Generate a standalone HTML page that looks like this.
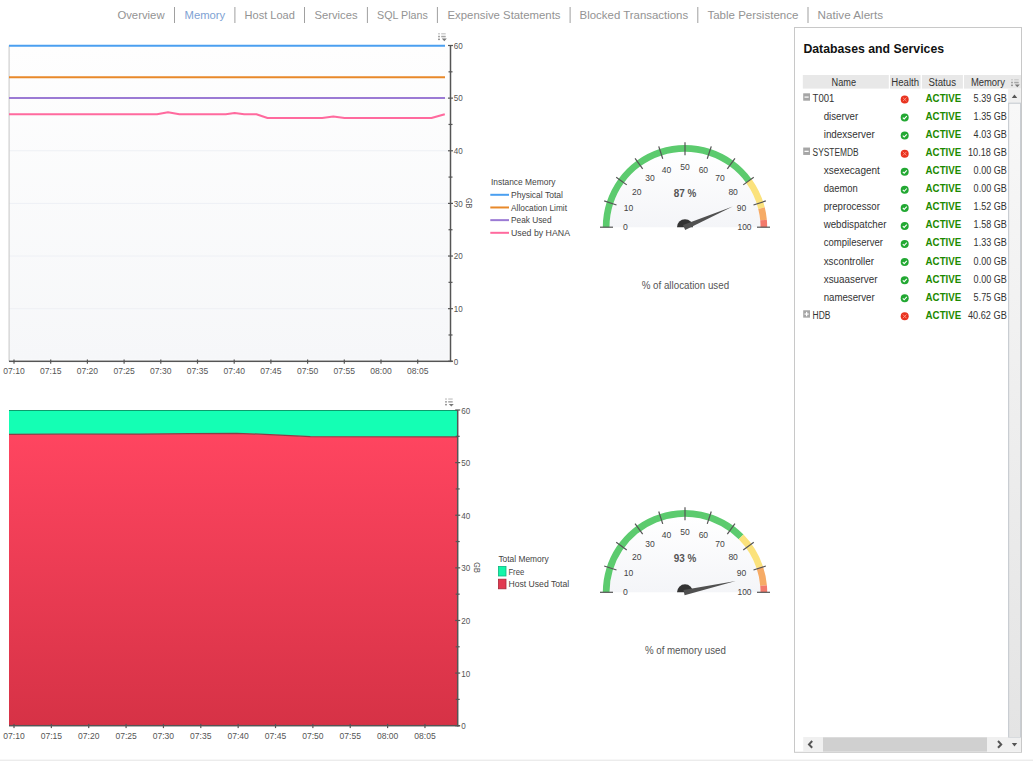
<!DOCTYPE html>
<html><head><meta charset="utf-8"><style>
html,body{margin:0;padding:0;background:#fff;width:1033px;height:761px;overflow:hidden}
svg{display:block;font-family:'Liberation Sans', sans-serif}
</style></head><body>
<svg width="1033" height="761" viewBox="0 0 1033 761">
<text x="117.40" y="19.10" font-size="11.5" fill="#939393" text-anchor="start" font-weight="normal" textLength="47.20" lengthAdjust="spacingAndGlyphs" >Overview</text>
<text x="184.50" y="19.10" font-size="11.5" fill="#7ea2d3" text-anchor="start" font-weight="normal" textLength="40.70" lengthAdjust="spacingAndGlyphs" >Memory</text>
<text x="244.60" y="19.10" font-size="11.5" fill="#939393" text-anchor="start" font-weight="normal" textLength="50.30" lengthAdjust="spacingAndGlyphs" >Host Load</text>
<text x="314.50" y="19.10" font-size="11.5" fill="#939393" text-anchor="start" font-weight="normal" textLength="43.00" lengthAdjust="spacingAndGlyphs" >Services</text>
<text x="377.00" y="19.10" font-size="11.5" fill="#939393" text-anchor="start" font-weight="normal" textLength="50.80" lengthAdjust="spacingAndGlyphs" >SQL Plans</text>
<text x="447.50" y="19.10" font-size="11.5" fill="#939393" text-anchor="start" font-weight="normal" textLength="113.00" lengthAdjust="spacingAndGlyphs" >Expensive Statements</text>
<text x="579.60" y="19.10" font-size="11.5" fill="#939393" text-anchor="start" font-weight="normal" textLength="108.60" lengthAdjust="spacingAndGlyphs" >Blocked Transactions</text>
<text x="707.40" y="19.10" font-size="11.5" fill="#939393" text-anchor="start" font-weight="normal" textLength="91.00" lengthAdjust="spacingAndGlyphs" >Table Persistence</text>
<text x="817.60" y="19.10" font-size="11.5" fill="#939393" text-anchor="start" font-weight="normal" textLength="65.50" lengthAdjust="spacingAndGlyphs" >Native Alerts</text>
<rect x="174.0" y="7" width="1" height="16" fill="#a0a0a0"/>
<rect x="234.4" y="7" width="1" height="16" fill="#a0a0a0"/>
<rect x="304.0" y="7" width="1" height="16" fill="#a0a0a0"/>
<rect x="366.9" y="7" width="1" height="16" fill="#a0a0a0"/>
<rect x="436.9" y="7" width="1" height="16" fill="#a0a0a0"/>
<rect x="569.6" y="7" width="1" height="16" fill="#a0a0a0"/>
<rect x="697.3" y="7" width="1" height="16" fill="#a0a0a0"/>
<rect x="807.5" y="7" width="1" height="16" fill="#a0a0a0"/>
<defs><linearGradient id="plotbg" x1="0" y1="0" x2="0" y2="1"><stop offset="0" stop-color="#fefefe"/><stop offset="1" stop-color="#f6f7f9"/></linearGradient><linearGradient id="redg" x1="0" y1="0" x2="0" y2="1"><stop offset="0" stop-color="#ff4560"/><stop offset="1" stop-color="#d63246"/></linearGradient><linearGradient id="gaugebg" x1="0" y1="0" x2="0" y2="1"><stop offset="0" stop-color="#ffffff"/><stop offset="1" stop-color="#f4f5f8"/></linearGradient></defs>
<rect x="9" y="45.5" width="439.8" height="314.3" fill="url(#plotbg)"/>
<rect x="9" y="308.17" width="439.8" height="1" fill="#eef0f5"/>
<rect x="9" y="255.53" width="439.8" height="1" fill="#eef0f5"/>
<rect x="9" y="202.90" width="439.8" height="1" fill="#eef0f5"/>
<rect x="9" y="150.27" width="439.8" height="1" fill="#eef0f5"/>
<rect x="9" y="97.63" width="439.8" height="1" fill="#eef0f5"/>
<rect x="8.5" y="45.5" width="1.2" height="315.8" fill="#cfcfcf"/>
<line x1="9" y1="45.8" x2="445" y2="45.8" stroke="#4a9ff0" stroke-width="2"/>
<line x1="9" y1="77.3" x2="445" y2="77.3" stroke="#e8892a" stroke-width="2"/>
<line x1="9" y1="98.1" x2="445" y2="98.1" stroke="#9b7ad4" stroke-width="2"/>
<polyline fill="none" stroke="#ff6a9e" stroke-width="2" stroke-linejoin="round" points="9,114.2 157,114.2 168,112.3 179.4,114.2 225.8,114.2 234.6,113.1 244.2,114.2 256.4,114.2 267.5,118 322.2,118 333.3,116.6 344.5,118 431.5,118 444.8,114.2"/>
<rect x="449.75" y="45.5" width="1.5" height="316.55" fill="#555"/>
<rect x="9" y="360.55" width="443.5" height="1.5" fill="#555"/>
<rect x="448.00" y="360.70" width="5" height="1.2" fill="#555"/>
<text x="453.70" y="364.50" font-size="9.5" fill="#555" text-anchor="start" font-weight="normal" textLength="4.50" lengthAdjust="spacingAndGlyphs" >0</text>
<rect x="448.50" y="334.38" width="4" height="1.2" fill="#555"/>
<rect x="448.00" y="308.07" width="5" height="1.2" fill="#555"/>
<text x="453.70" y="311.87" font-size="9.5" fill="#555" text-anchor="start" font-weight="normal" textLength="9.00" lengthAdjust="spacingAndGlyphs" >10</text>
<rect x="448.50" y="281.75" width="4" height="1.2" fill="#555"/>
<rect x="448.00" y="255.43" width="5" height="1.2" fill="#555"/>
<text x="453.70" y="259.23" font-size="9.5" fill="#555" text-anchor="start" font-weight="normal" textLength="9.00" lengthAdjust="spacingAndGlyphs" >20</text>
<rect x="448.50" y="229.12" width="4" height="1.2" fill="#555"/>
<rect x="448.00" y="202.80" width="5" height="1.2" fill="#555"/>
<text x="453.70" y="206.60" font-size="9.5" fill="#555" text-anchor="start" font-weight="normal" textLength="9.00" lengthAdjust="spacingAndGlyphs" >30</text>
<rect x="448.50" y="176.48" width="4" height="1.2" fill="#555"/>
<rect x="448.00" y="150.17" width="5" height="1.2" fill="#555"/>
<text x="453.70" y="153.97" font-size="9.5" fill="#555" text-anchor="start" font-weight="normal" textLength="9.00" lengthAdjust="spacingAndGlyphs" >40</text>
<rect x="448.50" y="123.85" width="4" height="1.2" fill="#555"/>
<rect x="448.00" y="97.53" width="5" height="1.2" fill="#555"/>
<text x="453.70" y="101.33" font-size="9.5" fill="#555" text-anchor="start" font-weight="normal" textLength="9.00" lengthAdjust="spacingAndGlyphs" >50</text>
<rect x="448.50" y="71.22" width="4" height="1.2" fill="#555"/>
<rect x="448.00" y="44.90" width="5" height="1.2" fill="#555"/>
<text x="453.70" y="48.70" font-size="9.5" fill="#555" text-anchor="start" font-weight="normal" textLength="9.00" lengthAdjust="spacingAndGlyphs" >60</text>
<text x="0.00" y="0.00" font-size="9.5" fill="#555" text-anchor="middle" font-weight="normal" textLength="10.50" lengthAdjust="spacingAndGlyphs" transform="translate(466.2,203.2) rotate(90)">GB</text>
<rect x="13.40" y="359.5" width="1.2" height="4.2" fill="#555"/>
<text x="14.00" y="374.20" font-size="9.5" fill="#555" text-anchor="middle" font-weight="normal" textLength="21.40" lengthAdjust="spacingAndGlyphs" >07:10</text>
<rect x="50.10" y="359.5" width="1.2" height="4.2" fill="#555"/>
<text x="50.70" y="374.20" font-size="9.5" fill="#555" text-anchor="middle" font-weight="normal" textLength="21.40" lengthAdjust="spacingAndGlyphs" >07:15</text>
<rect x="86.80" y="359.5" width="1.2" height="4.2" fill="#555"/>
<text x="87.40" y="374.20" font-size="9.5" fill="#555" text-anchor="middle" font-weight="normal" textLength="21.40" lengthAdjust="spacingAndGlyphs" >07:20</text>
<rect x="123.50" y="359.5" width="1.2" height="4.2" fill="#555"/>
<text x="124.10" y="374.20" font-size="9.5" fill="#555" text-anchor="middle" font-weight="normal" textLength="21.40" lengthAdjust="spacingAndGlyphs" >07:25</text>
<rect x="160.20" y="359.5" width="1.2" height="4.2" fill="#555"/>
<text x="160.80" y="374.20" font-size="9.5" fill="#555" text-anchor="middle" font-weight="normal" textLength="21.40" lengthAdjust="spacingAndGlyphs" >07:30</text>
<rect x="196.90" y="359.5" width="1.2" height="4.2" fill="#555"/>
<text x="197.50" y="374.20" font-size="9.5" fill="#555" text-anchor="middle" font-weight="normal" textLength="21.40" lengthAdjust="spacingAndGlyphs" >07:35</text>
<rect x="233.60" y="359.5" width="1.2" height="4.2" fill="#555"/>
<text x="234.20" y="374.20" font-size="9.5" fill="#555" text-anchor="middle" font-weight="normal" textLength="21.40" lengthAdjust="spacingAndGlyphs" >07:40</text>
<rect x="270.30" y="359.5" width="1.2" height="4.2" fill="#555"/>
<text x="270.90" y="374.20" font-size="9.5" fill="#555" text-anchor="middle" font-weight="normal" textLength="21.40" lengthAdjust="spacingAndGlyphs" >07:45</text>
<rect x="307.00" y="359.5" width="1.2" height="4.2" fill="#555"/>
<text x="307.60" y="374.20" font-size="9.5" fill="#555" text-anchor="middle" font-weight="normal" textLength="21.40" lengthAdjust="spacingAndGlyphs" >07:50</text>
<rect x="343.70" y="359.5" width="1.2" height="4.2" fill="#555"/>
<text x="344.30" y="374.20" font-size="9.5" fill="#555" text-anchor="middle" font-weight="normal" textLength="21.40" lengthAdjust="spacingAndGlyphs" >07:55</text>
<rect x="380.40" y="359.5" width="1.2" height="4.2" fill="#555"/>
<text x="381.00" y="374.20" font-size="9.5" fill="#555" text-anchor="middle" font-weight="normal" textLength="21.40" lengthAdjust="spacingAndGlyphs" >08:00</text>
<rect x="417.10" y="359.5" width="1.2" height="4.2" fill="#555"/>
<text x="417.70" y="374.20" font-size="9.5" fill="#555" text-anchor="middle" font-weight="normal" textLength="21.40" lengthAdjust="spacingAndGlyphs" >08:05</text>
<g transform="translate(438,33)"><rect x="0" y="0" width="2" height="1.5" fill="#cfcfcf"/><rect x="3.2" y="0" width="4.5" height="1.5" fill="#cfcfcf"/><rect x="0" y="2.8" width="2" height="1.5" fill="#a6a6a6"/><rect x="3.2" y="2.8" width="4.5" height="1.5" fill="#a6a6a6"/><rect x="0" y="5.6" width="2" height="1.5" fill="#999"/><path d="M3.8 5.6 L8.8 5.6 L6.3 8.2 Z" fill="#777"/></g>
<text x="491.00" y="185.00" font-size="9" fill="#444" text-anchor="start" font-weight="normal" textLength="64.40" lengthAdjust="spacingAndGlyphs" >Instance Memory</text>
<line x1="490.3" y1="194.80" x2="509" y2="194.80" stroke="#4a9ff0" stroke-width="2"/>
<text x="511.00" y="198.00" font-size="9" fill="#444" text-anchor="start" font-weight="normal" textLength="52.00" lengthAdjust="spacingAndGlyphs" >Physical Total</text>
<line x1="490.3" y1="207.47" x2="509" y2="207.47" stroke="#e8892a" stroke-width="2"/>
<text x="511.00" y="210.67" font-size="9" fill="#444" text-anchor="start" font-weight="normal" textLength="56.00" lengthAdjust="spacingAndGlyphs" >Allocation Limit</text>
<line x1="490.3" y1="220.14" x2="509" y2="220.14" stroke="#9b7ad4" stroke-width="2"/>
<text x="511.00" y="223.34" font-size="9" fill="#444" text-anchor="start" font-weight="normal" textLength="40.50" lengthAdjust="spacingAndGlyphs" >Peak Used</text>
<line x1="490.3" y1="232.81" x2="509" y2="232.81" stroke="#ff6a9e" stroke-width="2"/>
<text x="511.00" y="236.01" font-size="9" fill="#444" text-anchor="start" font-weight="normal" textLength="59.00" lengthAdjust="spacingAndGlyphs" >Used by HANA</text>
<polygon fill="#14ffb4" points="9,410.0 457.7,410.0 457,436.9 310.4,436.7 270,434.6 236.8,433.3 190,433.7 140,434.1 60,434.2 9,434.3"/>
<polygon fill="url(#redg)" points="9,434.3 60,434.2 140,434.1 190,433.7 236.8,433.3 270,434.6 310.4,436.7 457,436.9 457.7,725.7 9,725.7"/>
<line x1="9" y1="410.5" x2="457.7" y2="410.5" stroke="#0c9c6c" stroke-width="1"/>
<polyline fill="none" stroke="#8a3f47" stroke-width="1.2" points="9,434.3 60,434.2 140,434.1 190,433.7 236.8,433.3 270,434.6 310.4,436.7 457,436.9"/>
<rect x="456.95" y="410.0" width="1.5" height="316.45000000000005" fill="#555"/>
<rect x="9" y="724.95" width="450.7" height="1.5" fill="#555"/>
<rect x="455.20" y="725.10" width="5" height="1.2" fill="#555"/>
<text x="461.20" y="729.20" font-size="9.5" fill="#555" text-anchor="start" font-weight="normal" textLength="4.50" lengthAdjust="spacingAndGlyphs" >0</text>
<rect x="455.70" y="698.79" width="4" height="1.2" fill="#555"/>
<rect x="455.20" y="672.48" width="5" height="1.2" fill="#555"/>
<text x="461.20" y="676.58" font-size="9.5" fill="#555" text-anchor="start" font-weight="normal" textLength="9.00" lengthAdjust="spacingAndGlyphs" >10</text>
<rect x="455.70" y="646.18" width="4" height="1.2" fill="#555"/>
<rect x="455.20" y="619.87" width="5" height="1.2" fill="#555"/>
<text x="461.20" y="623.97" font-size="9.5" fill="#555" text-anchor="start" font-weight="normal" textLength="9.00" lengthAdjust="spacingAndGlyphs" >20</text>
<rect x="455.70" y="593.56" width="4" height="1.2" fill="#555"/>
<rect x="455.20" y="567.25" width="5" height="1.2" fill="#555"/>
<text x="461.20" y="571.35" font-size="9.5" fill="#555" text-anchor="start" font-weight="normal" textLength="9.00" lengthAdjust="spacingAndGlyphs" >30</text>
<rect x="455.70" y="540.94" width="4" height="1.2" fill="#555"/>
<rect x="455.20" y="514.63" width="5" height="1.2" fill="#555"/>
<text x="461.20" y="518.73" font-size="9.5" fill="#555" text-anchor="start" font-weight="normal" textLength="9.00" lengthAdjust="spacingAndGlyphs" >40</text>
<rect x="455.70" y="488.32" width="4" height="1.2" fill="#555"/>
<rect x="455.20" y="462.02" width="5" height="1.2" fill="#555"/>
<text x="461.20" y="466.12" font-size="9.5" fill="#555" text-anchor="start" font-weight="normal" textLength="9.00" lengthAdjust="spacingAndGlyphs" >50</text>
<rect x="455.70" y="435.71" width="4" height="1.2" fill="#555"/>
<rect x="455.20" y="409.40" width="5" height="1.2" fill="#555"/>
<text x="461.20" y="413.50" font-size="9.5" fill="#555" text-anchor="start" font-weight="normal" textLength="9.00" lengthAdjust="spacingAndGlyphs" >60</text>
<text x="0.00" y="0.00" font-size="9.5" fill="#555" text-anchor="middle" font-weight="normal" textLength="10.50" lengthAdjust="spacingAndGlyphs" transform="translate(474.3,567.6) rotate(90)">GB</text>
<rect x="13.40" y="723.9000000000001" width="1.2" height="4.2" fill="#555"/>
<text x="14.00" y="738.60" font-size="9.5" fill="#555" text-anchor="middle" font-weight="normal" textLength="21.40" lengthAdjust="spacingAndGlyphs" >07:10</text>
<rect x="50.76" y="723.9000000000001" width="1.2" height="4.2" fill="#555"/>
<text x="51.36" y="738.60" font-size="9.5" fill="#555" text-anchor="middle" font-weight="normal" textLength="21.40" lengthAdjust="spacingAndGlyphs" >07:15</text>
<rect x="88.12" y="723.9000000000001" width="1.2" height="4.2" fill="#555"/>
<text x="88.72" y="738.60" font-size="9.5" fill="#555" text-anchor="middle" font-weight="normal" textLength="21.40" lengthAdjust="spacingAndGlyphs" >07:20</text>
<rect x="125.48" y="723.9000000000001" width="1.2" height="4.2" fill="#555"/>
<text x="126.08" y="738.60" font-size="9.5" fill="#555" text-anchor="middle" font-weight="normal" textLength="21.40" lengthAdjust="spacingAndGlyphs" >07:25</text>
<rect x="162.84" y="723.9000000000001" width="1.2" height="4.2" fill="#555"/>
<text x="163.44" y="738.60" font-size="9.5" fill="#555" text-anchor="middle" font-weight="normal" textLength="21.40" lengthAdjust="spacingAndGlyphs" >07:30</text>
<rect x="200.20" y="723.9000000000001" width="1.2" height="4.2" fill="#555"/>
<text x="200.80" y="738.60" font-size="9.5" fill="#555" text-anchor="middle" font-weight="normal" textLength="21.40" lengthAdjust="spacingAndGlyphs" >07:35</text>
<rect x="237.56" y="723.9000000000001" width="1.2" height="4.2" fill="#555"/>
<text x="238.16" y="738.60" font-size="9.5" fill="#555" text-anchor="middle" font-weight="normal" textLength="21.40" lengthAdjust="spacingAndGlyphs" >07:40</text>
<rect x="274.92" y="723.9000000000001" width="1.2" height="4.2" fill="#555"/>
<text x="275.52" y="738.60" font-size="9.5" fill="#555" text-anchor="middle" font-weight="normal" textLength="21.40" lengthAdjust="spacingAndGlyphs" >07:45</text>
<rect x="312.28" y="723.9000000000001" width="1.2" height="4.2" fill="#555"/>
<text x="312.88" y="738.60" font-size="9.5" fill="#555" text-anchor="middle" font-weight="normal" textLength="21.40" lengthAdjust="spacingAndGlyphs" >07:50</text>
<rect x="349.64" y="723.9000000000001" width="1.2" height="4.2" fill="#555"/>
<text x="350.24" y="738.60" font-size="9.5" fill="#555" text-anchor="middle" font-weight="normal" textLength="21.40" lengthAdjust="spacingAndGlyphs" >07:55</text>
<rect x="387.00" y="723.9000000000001" width="1.2" height="4.2" fill="#555"/>
<text x="387.60" y="738.60" font-size="9.5" fill="#555" text-anchor="middle" font-weight="normal" textLength="21.40" lengthAdjust="spacingAndGlyphs" >08:00</text>
<rect x="424.36" y="723.9000000000001" width="1.2" height="4.2" fill="#555"/>
<text x="424.96" y="738.60" font-size="9.5" fill="#555" text-anchor="middle" font-weight="normal" textLength="21.40" lengthAdjust="spacingAndGlyphs" >08:05</text>
<g transform="translate(445,398.3)"><rect x="0" y="0" width="2" height="1.5" fill="#cfcfcf"/><rect x="3.2" y="0" width="4.5" height="1.5" fill="#cfcfcf"/><rect x="0" y="2.8" width="2" height="1.5" fill="#a6a6a6"/><rect x="3.2" y="2.8" width="4.5" height="1.5" fill="#a6a6a6"/><rect x="0" y="5.6" width="2" height="1.5" fill="#999"/><path d="M3.8 5.6 L8.8 5.6 L6.3 8.2 Z" fill="#777"/></g>
<text x="498.40" y="562.00" font-size="9" fill="#444" text-anchor="start" font-weight="normal" textLength="50.30" lengthAdjust="spacingAndGlyphs" >Total Memory</text>
<rect x="498.4" y="566.4" width="7.6" height="9.6" fill="#14f5a8" stroke="#0fb57f" stroke-width="0.8"/>
<rect x="498.4" y="579.2" width="7.6" height="9.6" fill="#e23a50" stroke="#a8283a" stroke-width="0.8"/>
<text x="508.40" y="574.50" font-size="9" fill="#444" text-anchor="start" font-weight="normal" textLength="15.80" lengthAdjust="spacingAndGlyphs" >Free</text>
<text x="508.40" y="587.30" font-size="9" fill="#444" text-anchor="start" font-weight="normal" textLength="60.80" lengthAdjust="spacingAndGlyphs" >Host Used Total</text>
<path d="M609.5,227.2 A75.5,75.5 0 0 1 760.5,227.2 Z" fill="url(#gaugebg)"/>
<path d="M602.80,227.20 A82.2,82.2 0 0 1 751.50,178.88 L746.08,182.82 A75.5,75.5 0 0 0 609.50,227.20 Z" fill="#5ccb6e"/>
<path d="M751.50,178.88 A82.2,82.2 0 0 1 764.74,207.26 L758.24,208.88 A75.5,75.5 0 0 0 746.08,182.82 Z" fill="#fbe27c"/>
<path d="M764.74,207.26 A82.2,82.2 0 0 1 766.86,219.72 L760.19,220.33 A75.5,75.5 0 0 0 758.24,208.88 Z" fill="#f6ab66"/>
<path d="M766.86,219.72 A82.2,82.2 0 0 1 767.20,227.20 L760.50,227.20 A75.5,75.5 0 0 0 760.19,220.33 Z" fill="#f37a6c"/>
<line x1="613.00" y1="227.20" x2="600.00" y2="227.20" stroke="#555" stroke-width="1.2"/>
<text x="625.50" y="229.60" font-size="9.5" fill="#444" text-anchor="middle" font-weight="normal" textLength="4.80" lengthAdjust="spacingAndGlyphs" >0</text>
<line x1="616.52" y1="204.95" x2="604.16" y2="200.93" stroke="#555" stroke-width="1.2"/>
<text x="628.41" y="211.21" font-size="9.5" fill="#444" text-anchor="middle" font-weight="normal" textLength="9.50" lengthAdjust="spacingAndGlyphs" >10</text>
<line x1="626.75" y1="184.88" x2="616.23" y2="177.24" stroke="#555" stroke-width="1.2"/>
<text x="636.86" y="194.63" font-size="9.5" fill="#444" text-anchor="middle" font-weight="normal" textLength="9.50" lengthAdjust="spacingAndGlyphs" >20</text>
<line x1="642.68" y1="168.95" x2="635.04" y2="158.43" stroke="#555" stroke-width="1.2"/>
<text x="650.03" y="181.46" font-size="9.5" fill="#444" text-anchor="middle" font-weight="normal" textLength="9.50" lengthAdjust="spacingAndGlyphs" >30</text>
<line x1="662.75" y1="158.72" x2="658.73" y2="146.36" stroke="#555" stroke-width="1.2"/>
<text x="666.61" y="173.01" font-size="9.5" fill="#444" text-anchor="middle" font-weight="normal" textLength="9.50" lengthAdjust="spacingAndGlyphs" >40</text>
<line x1="685.00" y1="155.20" x2="685.00" y2="142.20" stroke="#555" stroke-width="1.2"/>
<text x="685.00" y="170.10" font-size="9.5" fill="#444" text-anchor="middle" font-weight="normal" textLength="9.50" lengthAdjust="spacingAndGlyphs" >50</text>
<line x1="707.25" y1="158.72" x2="711.27" y2="146.36" stroke="#555" stroke-width="1.2"/>
<text x="703.39" y="173.01" font-size="9.5" fill="#444" text-anchor="middle" font-weight="normal" textLength="9.50" lengthAdjust="spacingAndGlyphs" >60</text>
<line x1="727.32" y1="168.95" x2="734.96" y2="158.43" stroke="#555" stroke-width="1.2"/>
<text x="719.97" y="181.46" font-size="9.5" fill="#444" text-anchor="middle" font-weight="normal" textLength="9.50" lengthAdjust="spacingAndGlyphs" >70</text>
<line x1="743.25" y1="184.88" x2="753.77" y2="177.24" stroke="#555" stroke-width="1.2"/>
<text x="733.14" y="194.63" font-size="9.5" fill="#444" text-anchor="middle" font-weight="normal" textLength="9.50" lengthAdjust="spacingAndGlyphs" >80</text>
<line x1="753.48" y1="204.95" x2="765.84" y2="200.93" stroke="#555" stroke-width="1.2"/>
<text x="741.59" y="211.21" font-size="9.5" fill="#444" text-anchor="middle" font-weight="normal" textLength="9.50" lengthAdjust="spacingAndGlyphs" >90</text>
<line x1="757.00" y1="227.20" x2="770.00" y2="227.20" stroke="#555" stroke-width="1.2"/>
<text x="744.50" y="229.60" font-size="9.5" fill="#444" text-anchor="middle" font-weight="normal" textLength="14.00" lengthAdjust="spacingAndGlyphs" >100</text>
<text x="685.00" y="197.20" font-size="11.5" fill="#555" text-anchor="middle" font-weight="bold" textLength="22.60" lengthAdjust="spacingAndGlyphs" >87 %</text>
<path d="M677,227.2 A8,8 0 0 1 693,227.2 Z" fill="#333"/>
<path d="M683.01,225.12 L732.72,206.55 L685.15,230.08 Z" fill="#505050"/>
<text x="685.40" y="289.20" font-size="10" fill="#555" text-anchor="middle" font-weight="normal" textLength="87.40" lengthAdjust="spacingAndGlyphs" >% of allocation used</text>
<path d="M609.5,592.3 A75.5,75.5 0 0 1 760.5,592.3 Z" fill="url(#gaugebg)"/>
<path d="M602.80,592.30 A82.2,82.2 0 0 1 743.49,534.54 L738.72,539.25 A75.5,75.5 0 0 0 609.50,592.30 Z" fill="#5ccb6e"/>
<path d="M743.49,534.54 A82.2,82.2 0 0 1 762.93,566.16 L756.58,568.29 A75.5,75.5 0 0 0 738.72,539.25 Z" fill="#fbe27c"/>
<path d="M762.93,566.16 A82.2,82.2 0 0 1 766.90,585.34 L760.23,585.90 A75.5,75.5 0 0 0 756.58,568.29 Z" fill="#f6ab66"/>
<path d="M766.90,585.34 A82.2,82.2 0 0 1 767.20,592.30 L760.50,592.30 A75.5,75.5 0 0 0 760.23,585.90 Z" fill="#f37a6c"/>
<line x1="613.00" y1="592.30" x2="600.00" y2="592.30" stroke="#555" stroke-width="1.2"/>
<text x="625.50" y="594.70" font-size="9.5" fill="#444" text-anchor="middle" font-weight="normal" textLength="4.80" lengthAdjust="spacingAndGlyphs" >0</text>
<line x1="616.52" y1="570.05" x2="604.16" y2="566.03" stroke="#555" stroke-width="1.2"/>
<text x="628.41" y="576.31" font-size="9.5" fill="#444" text-anchor="middle" font-weight="normal" textLength="9.50" lengthAdjust="spacingAndGlyphs" >10</text>
<line x1="626.75" y1="549.98" x2="616.23" y2="542.34" stroke="#555" stroke-width="1.2"/>
<text x="636.86" y="559.73" font-size="9.5" fill="#444" text-anchor="middle" font-weight="normal" textLength="9.50" lengthAdjust="spacingAndGlyphs" >20</text>
<line x1="642.68" y1="534.05" x2="635.04" y2="523.53" stroke="#555" stroke-width="1.2"/>
<text x="650.03" y="546.56" font-size="9.5" fill="#444" text-anchor="middle" font-weight="normal" textLength="9.50" lengthAdjust="spacingAndGlyphs" >30</text>
<line x1="662.75" y1="523.82" x2="658.73" y2="511.46" stroke="#555" stroke-width="1.2"/>
<text x="666.61" y="538.11" font-size="9.5" fill="#444" text-anchor="middle" font-weight="normal" textLength="9.50" lengthAdjust="spacingAndGlyphs" >40</text>
<line x1="685.00" y1="520.30" x2="685.00" y2="507.30" stroke="#555" stroke-width="1.2"/>
<text x="685.00" y="535.20" font-size="9.5" fill="#444" text-anchor="middle" font-weight="normal" textLength="9.50" lengthAdjust="spacingAndGlyphs" >50</text>
<line x1="707.25" y1="523.82" x2="711.27" y2="511.46" stroke="#555" stroke-width="1.2"/>
<text x="703.39" y="538.11" font-size="9.5" fill="#444" text-anchor="middle" font-weight="normal" textLength="9.50" lengthAdjust="spacingAndGlyphs" >60</text>
<line x1="727.32" y1="534.05" x2="734.96" y2="523.53" stroke="#555" stroke-width="1.2"/>
<text x="719.97" y="546.56" font-size="9.5" fill="#444" text-anchor="middle" font-weight="normal" textLength="9.50" lengthAdjust="spacingAndGlyphs" >70</text>
<line x1="743.25" y1="549.98" x2="753.77" y2="542.34" stroke="#555" stroke-width="1.2"/>
<text x="733.14" y="559.73" font-size="9.5" fill="#444" text-anchor="middle" font-weight="normal" textLength="9.50" lengthAdjust="spacingAndGlyphs" >80</text>
<line x1="753.48" y1="570.05" x2="765.84" y2="566.03" stroke="#555" stroke-width="1.2"/>
<text x="741.59" y="576.31" font-size="9.5" fill="#444" text-anchor="middle" font-weight="normal" textLength="9.50" lengthAdjust="spacingAndGlyphs" >90</text>
<line x1="757.00" y1="592.30" x2="770.00" y2="592.30" stroke="#555" stroke-width="1.2"/>
<text x="744.50" y="594.70" font-size="9.5" fill="#444" text-anchor="middle" font-weight="normal" textLength="14.00" lengthAdjust="spacingAndGlyphs" >100</text>
<text x="685.00" y="562.30" font-size="11.5" fill="#555" text-anchor="middle" font-weight="bold" textLength="22.60" lengthAdjust="spacingAndGlyphs" >93 %</text>
<path d="M677,592.3 A8,8 0 0 1 693,592.3 Z" fill="#333"/>
<path d="M683.44,589.88 L735.75,580.96 L684.61,595.15 Z" fill="#505050"/>
<text x="685.40" y="654.30" font-size="10" fill="#555" text-anchor="middle" font-weight="normal" textLength="81.00" lengthAdjust="spacingAndGlyphs" >% of memory used</text>
<rect x="794.5" y="27.5" width="227" height="724.8" fill="#fff" stroke="#c8c8c8" stroke-width="1"/>
<text x="803.40" y="52.80" font-size="12.8" fill="#111" text-anchor="start" font-weight="bold" textLength="140.70" lengthAdjust="spacingAndGlyphs" >Databases and Services</text>
<rect x="802.8" y="75" width="86" height="13.6" fill="#e8e8e8"/>
<rect x="890" y="75" width="30.6" height="13.6" fill="#e8e8e8"/>
<rect x="921.9" y="75" width="41" height="13.6" fill="#e8e8e8"/>
<rect x="964" y="75" width="57" height="13.6" fill="#e8e8e8"/>
<text x="831.50" y="85.70" font-size="10" fill="#333" text-anchor="start" font-weight="normal" textLength="24.50" lengthAdjust="spacingAndGlyphs" >Name</text>
<text x="891.30" y="85.70" font-size="10" fill="#333" text-anchor="start" font-weight="normal" textLength="27.70" lengthAdjust="spacingAndGlyphs" >Health</text>
<text x="928.60" y="85.70" font-size="10" fill="#333" text-anchor="start" font-weight="normal" textLength="27.40" lengthAdjust="spacingAndGlyphs" >Status</text>
<text x="970.90" y="85.70" font-size="10" fill="#333" text-anchor="start" font-weight="normal" textLength="34.10" lengthAdjust="spacingAndGlyphs" >Memory</text>
<g transform="translate(1011,79)"><rect x="0" y="0" width="2" height="1.5" fill="#cfcfcf"/><rect x="3.2" y="0" width="4.5" height="1.5" fill="#cfcfcf"/><rect x="0" y="2.8" width="2" height="1.5" fill="#a6a6a6"/><rect x="3.2" y="2.8" width="4.5" height="1.5" fill="#a6a6a6"/><rect x="0" y="5.6" width="2" height="1.5" fill="#999"/><path d="M3.8 5.6 L8.8 5.6 L6.3 8.2 Z" fill="#777"/></g>
<rect x="803.2" y="93.30" width="6.8" height="7.4" fill="#a6a6a6"/>
<rect x="804.5" y="96.50" width="4.2" height="1.2" fill="#fff"/>
<text x="812.60" y="101.80" font-size="10" fill="#333" text-anchor="start" font-weight="normal" textLength="21.70" lengthAdjust="spacingAndGlyphs" >T001</text>
<circle cx="904.7" cy="99.40" r="4" fill="#e8321e"/>
<path d="M902.9,97.60 L906.5,101.20 M906.5,97.60 L902.9,101.20" stroke="#ff9a8a" stroke-width="0.9"/>
<text x="925.60" y="101.80" font-size="10.5" fill="#1d8a00" text-anchor="start" font-weight="bold" textLength="35.70" lengthAdjust="spacingAndGlyphs" >ACTIVE</text>
<text x="1006.80" y="101.80" font-size="10" fill="#333" text-anchor="end" font-weight="normal" textLength="33.20" lengthAdjust="spacingAndGlyphs" >5.39 GB</text>
<text x="823.70" y="119.88" font-size="10" fill="#333" text-anchor="start" font-weight="normal" textLength="34.50" lengthAdjust="spacingAndGlyphs" >diserver</text>
<circle cx="904.7" cy="117.48" r="4" fill="#22a832"/>
<path d="M902.8,117.58 L904.2,118.98 L906.8,116.18" fill="none" stroke="#fff" stroke-width="1.1"/>
<text x="925.60" y="119.88" font-size="10.5" fill="#1d8a00" text-anchor="start" font-weight="bold" textLength="35.70" lengthAdjust="spacingAndGlyphs" >ACTIVE</text>
<text x="1006.80" y="119.88" font-size="10" fill="#333" text-anchor="end" font-weight="normal" textLength="33.20" lengthAdjust="spacingAndGlyphs" >1.35 GB</text>
<text x="823.70" y="137.96" font-size="10" fill="#333" text-anchor="start" font-weight="normal" textLength="51.00" lengthAdjust="spacingAndGlyphs" >indexserver</text>
<circle cx="904.7" cy="135.56" r="4" fill="#22a832"/>
<path d="M902.8,135.66 L904.2,137.06 L906.8,134.26" fill="none" stroke="#fff" stroke-width="1.1"/>
<text x="925.60" y="137.96" font-size="10.5" fill="#1d8a00" text-anchor="start" font-weight="bold" textLength="35.70" lengthAdjust="spacingAndGlyphs" >ACTIVE</text>
<text x="1006.80" y="137.96" font-size="10" fill="#333" text-anchor="end" font-weight="normal" textLength="33.20" lengthAdjust="spacingAndGlyphs" >4.03 GB</text>
<rect x="803.2" y="147.54" width="6.8" height="7.4" fill="#a6a6a6"/>
<rect x="804.5" y="150.74" width="4.2" height="1.2" fill="#fff"/>
<text x="812.60" y="156.04" font-size="10" fill="#333" text-anchor="start" font-weight="normal" textLength="46.00" lengthAdjust="spacingAndGlyphs" >SYSTEMDB</text>
<circle cx="904.7" cy="153.64" r="4" fill="#e8321e"/>
<path d="M902.9,151.84 L906.5,155.44 M906.5,151.84 L902.9,155.44" stroke="#ff9a8a" stroke-width="0.9"/>
<text x="925.60" y="156.04" font-size="10.5" fill="#1d8a00" text-anchor="start" font-weight="bold" textLength="35.70" lengthAdjust="spacingAndGlyphs" >ACTIVE</text>
<text x="1006.80" y="156.04" font-size="10" fill="#333" text-anchor="end" font-weight="normal" textLength="38.80" lengthAdjust="spacingAndGlyphs" >10.18 GB</text>
<text x="823.70" y="174.12" font-size="10" fill="#333" text-anchor="start" font-weight="normal" textLength="56.20" lengthAdjust="spacingAndGlyphs" >xsexecagent</text>
<circle cx="904.7" cy="171.72" r="4" fill="#22a832"/>
<path d="M902.8,171.82 L904.2,173.22 L906.8,170.42" fill="none" stroke="#fff" stroke-width="1.1"/>
<text x="925.60" y="174.12" font-size="10.5" fill="#1d8a00" text-anchor="start" font-weight="bold" textLength="35.70" lengthAdjust="spacingAndGlyphs" >ACTIVE</text>
<text x="1006.80" y="174.12" font-size="10" fill="#333" text-anchor="end" font-weight="normal" textLength="33.20" lengthAdjust="spacingAndGlyphs" >0.00 GB</text>
<text x="823.70" y="192.20" font-size="10" fill="#333" text-anchor="start" font-weight="normal" textLength="34.00" lengthAdjust="spacingAndGlyphs" >daemon</text>
<circle cx="904.7" cy="189.80" r="4" fill="#22a832"/>
<path d="M902.8,189.90 L904.2,191.30 L906.8,188.50" fill="none" stroke="#fff" stroke-width="1.1"/>
<text x="925.60" y="192.20" font-size="10.5" fill="#1d8a00" text-anchor="start" font-weight="bold" textLength="35.70" lengthAdjust="spacingAndGlyphs" >ACTIVE</text>
<text x="1006.80" y="192.20" font-size="10" fill="#333" text-anchor="end" font-weight="normal" textLength="33.20" lengthAdjust="spacingAndGlyphs" >0.00 GB</text>
<text x="823.70" y="210.28" font-size="10" fill="#333" text-anchor="start" font-weight="normal" textLength="56.20" lengthAdjust="spacingAndGlyphs" >preprocessor</text>
<circle cx="904.7" cy="207.88" r="4" fill="#22a832"/>
<path d="M902.8,207.98 L904.2,209.38 L906.8,206.58" fill="none" stroke="#fff" stroke-width="1.1"/>
<text x="925.60" y="210.28" font-size="10.5" fill="#1d8a00" text-anchor="start" font-weight="bold" textLength="35.70" lengthAdjust="spacingAndGlyphs" >ACTIVE</text>
<text x="1006.80" y="210.28" font-size="10" fill="#333" text-anchor="end" font-weight="normal" textLength="33.20" lengthAdjust="spacingAndGlyphs" >1.52 GB</text>
<text x="823.70" y="228.36" font-size="10" fill="#333" text-anchor="start" font-weight="normal" textLength="62.70" lengthAdjust="spacingAndGlyphs" >webdispatcher</text>
<circle cx="904.7" cy="225.96" r="4" fill="#22a832"/>
<path d="M902.8,226.06 L904.2,227.46 L906.8,224.66" fill="none" stroke="#fff" stroke-width="1.1"/>
<text x="925.60" y="228.36" font-size="10.5" fill="#1d8a00" text-anchor="start" font-weight="bold" textLength="35.70" lengthAdjust="spacingAndGlyphs" >ACTIVE</text>
<text x="1006.80" y="228.36" font-size="10" fill="#333" text-anchor="end" font-weight="normal" textLength="33.20" lengthAdjust="spacingAndGlyphs" >1.58 GB</text>
<text x="823.70" y="246.44" font-size="10" fill="#333" text-anchor="start" font-weight="normal" textLength="59.20" lengthAdjust="spacingAndGlyphs" >compileserver</text>
<circle cx="904.7" cy="244.04" r="4" fill="#22a832"/>
<path d="M902.8,244.14 L904.2,245.54 L906.8,242.74" fill="none" stroke="#fff" stroke-width="1.1"/>
<text x="925.60" y="246.44" font-size="10.5" fill="#1d8a00" text-anchor="start" font-weight="bold" textLength="35.70" lengthAdjust="spacingAndGlyphs" >ACTIVE</text>
<text x="1006.80" y="246.44" font-size="10" fill="#333" text-anchor="end" font-weight="normal" textLength="33.20" lengthAdjust="spacingAndGlyphs" >1.33 GB</text>
<text x="823.70" y="264.52" font-size="10" fill="#333" text-anchor="start" font-weight="normal" textLength="50.30" lengthAdjust="spacingAndGlyphs" >xscontroller</text>
<circle cx="904.7" cy="262.12" r="4" fill="#22a832"/>
<path d="M902.8,262.22 L904.2,263.62 L906.8,260.82" fill="none" stroke="#fff" stroke-width="1.1"/>
<text x="925.60" y="264.52" font-size="10.5" fill="#1d8a00" text-anchor="start" font-weight="bold" textLength="35.70" lengthAdjust="spacingAndGlyphs" >ACTIVE</text>
<text x="1006.80" y="264.52" font-size="10" fill="#333" text-anchor="end" font-weight="normal" textLength="33.20" lengthAdjust="spacingAndGlyphs" >0.00 GB</text>
<text x="823.70" y="282.60" font-size="10" fill="#333" text-anchor="start" font-weight="normal" textLength="53.80" lengthAdjust="spacingAndGlyphs" >xsuaaserver</text>
<circle cx="904.7" cy="280.20" r="4" fill="#22a832"/>
<path d="M902.8,280.30 L904.2,281.70 L906.8,278.90" fill="none" stroke="#fff" stroke-width="1.1"/>
<text x="925.60" y="282.60" font-size="10.5" fill="#1d8a00" text-anchor="start" font-weight="bold" textLength="35.70" lengthAdjust="spacingAndGlyphs" >ACTIVE</text>
<text x="1006.80" y="282.60" font-size="10" fill="#333" text-anchor="end" font-weight="normal" textLength="33.20" lengthAdjust="spacingAndGlyphs" >0.00 GB</text>
<text x="823.70" y="300.68" font-size="10" fill="#333" text-anchor="start" font-weight="normal" textLength="51.00" lengthAdjust="spacingAndGlyphs" >nameserver</text>
<circle cx="904.7" cy="298.28" r="4" fill="#22a832"/>
<path d="M902.8,298.38 L904.2,299.78 L906.8,296.98" fill="none" stroke="#fff" stroke-width="1.1"/>
<text x="925.60" y="300.68" font-size="10.5" fill="#1d8a00" text-anchor="start" font-weight="bold" textLength="35.70" lengthAdjust="spacingAndGlyphs" >ACTIVE</text>
<text x="1006.80" y="300.68" font-size="10" fill="#333" text-anchor="end" font-weight="normal" textLength="33.20" lengthAdjust="spacingAndGlyphs" >5.75 GB</text>
<rect x="803.2" y="310.26" width="6.8" height="7.4" fill="#a6a6a6"/>
<rect x="804.5" y="313.46" width="4.2" height="1.2" fill="#fff"/>
<rect x="806" y="311.86" width="1.2" height="4.4" fill="#fff"/>
<text x="812.60" y="318.76" font-size="10" fill="#333" text-anchor="start" font-weight="normal" textLength="17.90" lengthAdjust="spacingAndGlyphs" >HDB</text>
<circle cx="904.7" cy="316.36" r="4" fill="#e8321e"/>
<path d="M902.9,314.56 L906.5,318.16 M906.5,314.56 L902.9,318.16" stroke="#ff9a8a" stroke-width="0.9"/>
<text x="925.60" y="318.76" font-size="10.5" fill="#1d8a00" text-anchor="start" font-weight="bold" textLength="35.70" lengthAdjust="spacingAndGlyphs" >ACTIVE</text>
<text x="1006.80" y="318.76" font-size="10" fill="#333" text-anchor="end" font-weight="normal" textLength="38.80" lengthAdjust="spacingAndGlyphs" >40.62 GB</text>
<rect x="1008" y="89.2" width="13" height="13.6" fill="#f0f0f0"/>
<path d="M1011.8,98 L1017.2,98 L1014.5,94.6 Z" fill="#555"/>
<defs><linearGradient id="thumb" x1="0" y1="0" x2="0" y2="1"><stop offset="0" stop-color="#f8f8f8"/><stop offset="1" stop-color="#e4e4e4"/></linearGradient></defs>
<rect x="1008.6" y="103.2" width="12" height="634.4" fill="url(#thumb)" stroke="#c9cdd2" stroke-width="1.2"/>
<rect x="1008" y="737.6" width="13" height="14" fill="#f0f0f0"/>
<path d="M1011.8,743 L1017.2,743 L1014.5,746.4 Z" fill="#555"/>
<rect x="803.2" y="737" width="204.8" height="14.8" fill="#f0f0f0"/>
<rect x="823" y="737.4" width="164" height="14.2" fill="#d0d0d0"/>
<path d="M812.2,741 L809,744.4 L812.2,747.8" fill="none" stroke="#555" stroke-width="2"/>
<path d="M998,741 L1001.2,744.4 L998,747.8" fill="none" stroke="#555" stroke-width="2"/>
<rect x="0" y="759.6" width="1033" height="1.4" fill="#ececec"/>
</svg></body></html>
